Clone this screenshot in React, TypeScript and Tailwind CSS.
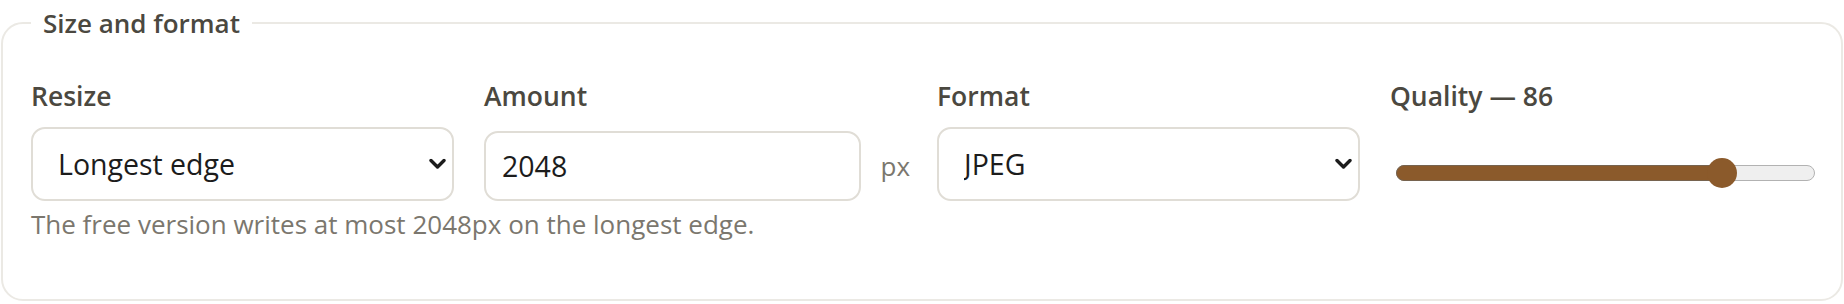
import { useState } from 'react';

const labelCls = "block text-[26.5px] leading-[36px] font-semibold text-[#4b4840]";

function Chevron() {
  return (
    <svg width="17" height="11" viewBox="0 0 17 11" className="pointer-events-none absolute right-[8px] top-1/2 -translate-y-1/2">
      <path d="M2 2 L8.5 8.5 L15 2" fill="none" stroke="#1c1c1c" strokeWidth="3.4" strokeLinecap="round" strokeLinejoin="round" />
    </svg>
  );
}

function Select({ options, value, onChange }: { options: string[]; value: string; onChange: (v: string) => void }) {
  return (
    <div className="relative mt-[13px]">
      <select
        value={value}
        onChange={(e) => onChange(e.target.value)}
        className="h-[74px] w-full appearance-none rounded-[14px] border-2 border-[#e0ddd6] bg-white pl-[25px] pr-[40px] text-[28.5px] text-[#1c1c1c] outline-none"
      >
        {options.map((o) => (
          <option key={o}>{o}</option>
        ))}
      </select>
      <Chevron />
    </div>
  );
}

function Slider({ value, min, max, onChange }: { value: number; min: number; max: number; onChange: (v: number) => void }) {
  const pct = (value - min) / (max - min);
  return (
    <div className="relative ml-[6px] mr-[-2px] mt-[51px] h-[16px]">
      <div className="absolute inset-0 rounded-full border-[1.5px] border-[#b2b2b2] bg-[#efefef]" />
      <div
        className="absolute inset-y-0 left-0 rounded-full border-[1.5px] border-[#76634f] bg-[#8b5a2b]"
        style={{ width: `calc(15px + ${pct} * (100% - 30px))` }}
      />
      <div
        className="absolute top-1/2 h-[30px] w-[30px] -translate-x-1/2 -translate-y-1/2 rounded-full bg-[#8b5a2b]"
        style={{ left: `calc(15px + ${pct} * (100% - 30px))` }}
      />
      <input
        type="range"
        min={min}
        max={max}
        value={value}
        onChange={(e) => onChange(Number(e.target.value))}
        className="absolute inset-0 -top-[8px] h-[32px] w-full cursor-pointer opacity-0"
      />
    </div>
  );
}

export default function App() {
  const [resize, setResize] = useState('Longest edge');
  const [amount, setAmount] = useState('2048');
  const [format, setFormat] = useState('JPEG');
  const [quality, setQuality] = useState(86);

  return (
    <div className="min-h-screen bg-white px-px pt-[5px] font-['Segoe_UI','Open_Sans',sans-serif]">
      <fieldset className="rounded-[22px] border-2 border-[#ebe9e4] bg-white px-[28px] pb-[57px] pt-[37px]">
        <legend className="px-3 text-[26px] leading-[36px] font-semibold text-[#4b4840]">Size and format</legend>

        <div className="grid grid-cols-4 gap-x-[30px]">
          <div>
            <label className={labelCls}>Resize</label>
            <Select options={['Longest edge', 'Width', 'Height', 'Percent']} value={resize} onChange={setResize} />
          </div>

          <div>
            <label className={labelCls}>Amount</label>
            <div className="mr-[-3px] mt-[17px] flex items-center gap-[19px]">
              <input
                value={amount}
                onChange={(e) => setAmount(e.target.value)}
                className="h-[70px] min-w-0 flex-1 rounded-[14px] border-2 border-[#e0ddd6] bg-white pl-[16px] text-[28.5px] text-[#1c1c1c] outline-none"
              />
              <span className="text-[26px] text-[#7b776e]">px</span>
            </div>
          </div>

          <div>
            <label className={labelCls}>Format</label>
            <Select options={['JPEG', 'PNG', 'WebP']} value={format} onChange={setFormat} />
          </div>

          <div>
            <label className={labelCls}>Quality — {quality}</label>
            <Slider value={quality} min={30} max={100} onChange={setQuality} />
          </div>
        </div>

        <p className="mt-[5px] text-[26px] leading-[36px] text-[#7b776e]">
          The free version writes at most 2048px on the longest edge.
        </p>
      </fieldset>
    </div>
  );
}
